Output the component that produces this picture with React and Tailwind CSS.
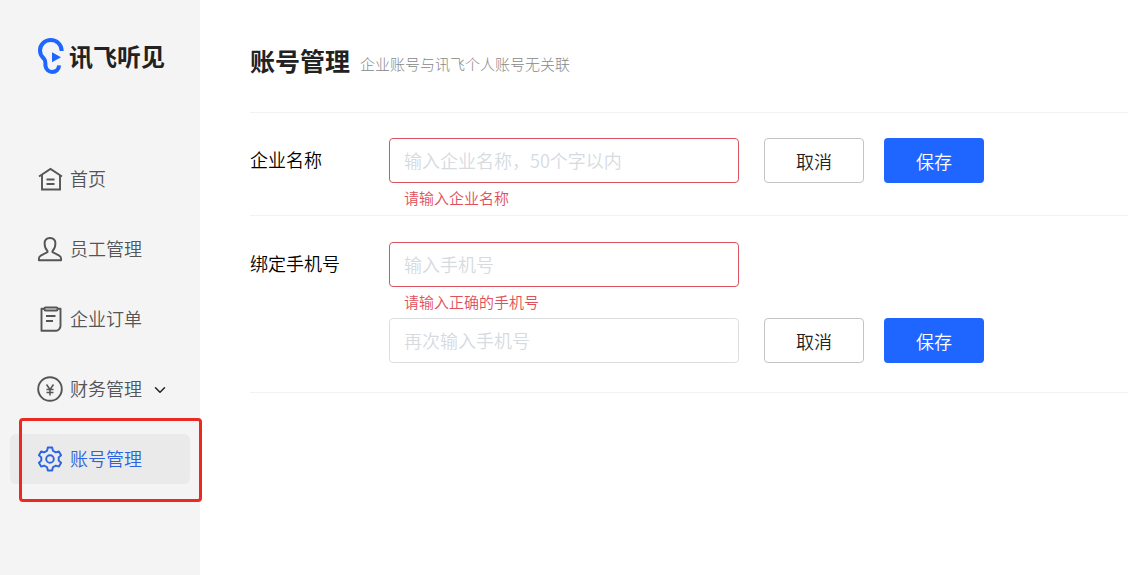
import React from "react";
import { ChevronDown } from "lucide-react";

const iconProps = {
  viewBox: "0 0 26 26",
  fill: "none",
  stroke: "currentColor",
  strokeWidth: 1.9,
  className: "w-[26px] h-[26px] shrink-0",
  "aria-hidden": true,
};

function HomeIcon() {
  return (
    <svg {...iconProps}>
      <path d="M2 10.5 13.5 3 25 10.5" />
      <path d="M5 9v14.5h18V9M9.5 13.5h8M9.5 18h8" />
    </svg>
  );
}

function StaffIcon() {
  return (
    <svg {...iconProps} strokeLinejoin="round">
      <path d="M10.5 15C8.5 13.2 7.6 10.6 7.6 7.6 7.6 4 9.8 2 13 2s5.4 2 5.4 5.6c0 3-.9 5.6-2.9 7.4v1.2l6.3 3.1c1.6.8 2.3 1.900 2.3 3.500v1.500H1.900v-1.500c0-1.600.7-2.700 2.300-3.500l6.300-3.100z" />
    </svg>
  );
}

function OrderIcon() {
  return (
    <svg {...iconProps} strokeLinejoin="round">
      <path d="M7 2.8H4.5v22h14.7c2.5-.8 4-2.3 4.3-4.5V2.8H21" />
      <rect x="7.5" y="1.5" width="13" height="3" rx="1" />
      <path d="M9 10h9.5M9 15h7" />
    </svg>
  );
}

function FinanceIcon() {
  return (
    <svg {...iconProps}>
      <circle cx="13" cy="13" r="11.8" />
      <path strokeWidth="1.5" d="m9.500 8.500 3.500 5 3.500-5M13 13v6.500M9.500 13.500h7M9.500 16.500h7" />
    </svg>
  );
}

function AccountIcon() {
  return (
    <svg {...iconProps} strokeLinejoin="round">
      <path d="M10.8 1.5h4.4l.7 3.2 2.900 1.700 3.100-1 2.200 3.800-2.400 2.200v3.200l2.400 2.200-2.200 3.800-3.100-1-2.900 1.700-.7 3.200h-4.400l-.7-3.200-2.900-1.700-3.100 1-2.200-3.800 2.400-2.200v-3.200L1.900 9.200l2.200-3.800 3.100 1 2.900-1.700z" />
      <circle cx="13" cy="13" r="3.8" />
    </svg>
  );
}

const menu = [
  { label: "首页", icon: <HomeIcon /> },
  { label: "员工管理", icon: <StaffIcon /> },
  { label: "企业订单", icon: <OrderIcon /> },
  { label: "财务管理", icon: <FinanceIcon />, more: true },
  { label: "账号管理", icon: <AccountIcon />, active: true },
];

function Logo() {
  return (
    <a href="#" className="flex items-center gap-[5px] h-9 pl-[37px] text-[#222]">
      <svg viewBox="0 0 27 36" className="w-[27px] h-9" fill="none" aria-hidden="true">
        <path
          d="M24.7 13C24.7 6.5 19.7 2 13.8 2 7.8 2 3 6.5 3 12.5c0 5 2.200 6.300 4.200 8.500 1.800 2 .9 4 1.300 7 .5 3.700 3.300 5.900 6.700 5.900 3.700 0 6.600-2.300 6.900-6.500"
          stroke="#1e66ff"
          strokeWidth="4"
        />
        <path d="M15 14.3v10l9-5z" fill="#1e66ff" />
      </svg>
      <span className="text-2xl leading-9 font-bold">讯飞听见</span>
    </a>
  );
}

function MenuItem({ item }) {
  return (
    <li className="relative">
      <a
        href="#"
        className={
          item.active
            ? "flex items-center gap-[7px] h-[50px] pl-[27px] rounded-md bg-[#eaeaea] text-[#2b63e0]"
            : "flex items-center gap-[7px] h-[50px] pl-[27px] rounded-md text-[#555]"
        }
      >
        {item.icon}
        <span className="text-lg font-[350] pb-0.5">{item.label}</span>
        {item.more && <ChevronDown className="w-[18px] h-[18px] mt-0.5 ml-0.5 text-[#222]" strokeWidth={2} />}
      </a>
      {item.active && (
        <div className="absolute left-[9px] -right-3 -top-4 -bottom-[18px] border-3 border-[#ea2a20] rounded-sm pointer-events-none" />
      )}
    </li>
  );
}

function TextField({ id, placeholder, label, error }) {
  return (
    <div>
      <input
        id={id}
        type="text"
        placeholder={placeholder}
        aria-label={label}
        className={
          error
            ? "block w-full h-[45px] px-3.5 pb-0.5 border border-[#d9535f] rounded bg-white text-lg font-[350] placeholder:text-[#d6dbdf]"
            : "block w-full h-[45px] px-3.5 pb-0.5 border border-[#dcdfe2] rounded bg-white text-lg font-[350] placeholder:text-[#d6dbdf]"
        }
      />
      {error && (
        <p className="h-[31px] pl-[15px] text-[15px] leading-[30px] font-[350] text-[#e04f5c]">{error}</p>
      )}
    </div>
  );
}

function Actions() {
  return (
    <div className="flex gap-5 ml-[25px]">
      <button
        type="button"
        className="w-[100px] h-[45px] border border-[#c4c4c4] rounded bg-white text-lg font-[350] text-[#222]"
      >
        取消
      </button>
      <button type="submit" className="w-[100px] h-[45px] rounded bg-[#1e66ff] text-lg font-[350] text-white">
        保存
      </button>
    </div>
  );
}

export default function App() {
  return (
    <div className="flex min-h-screen bg-white font-['Noto_Sans_CJK_SC',sans-serif]">
      <aside className="w-[200px] shrink-0 bg-[#f4f4f4] pt-[38px]">
        <Logo />
        <nav className="px-2.5 pt-20">
          <ul className="flex flex-col gap-5">
            {menu.map((item) => (
              <MenuItem key={item.label} item={item} />
            ))}
          </ul>
        </nav>
      </aside>

      <main className="flex-1 pl-[50px]">
        <header className="flex items-start gap-2.5 h-[113px] pt-[42px] border-b border-[#f2f2f2]">
          <h1 className="text-[25px] leading-9 font-bold text-[#222]">账号管理</h1>
          <p className="pt-1 text-[15px] leading-9 font-light text-[#888]">企业账号与讯飞个人账号无关联</p>
        </header>

        <form className="flex pt-[25px] pb-px border-b border-[#f2f2f2]">
          <label htmlFor="company" className="w-[139px] text-lg leading-[43px] font-[350] text-black">
            企业名称
          </label>
          <div className="w-[350px]">
            <TextField id="company" placeholder="输入企业名称，50个字以内" error="请输入企业名称" />
          </div>
          <Actions />
        </form>

        <form className="flex pt-[26px] pb-[29px] border-b border-[#f2f2f2]">
          <label htmlFor="phone" className="w-[139px] text-lg leading-[43px] font-[350] text-black">
            绑定手机号
          </label>
          <div className="w-[350px]">
            <TextField id="phone" placeholder="输入手机号" error="请输入正确的手机号" />
            <TextField id="phone-again" label="再次输入手机号" placeholder="再次输入手机号" />
          </div>
          <div className="self-end">
            <Actions />
          </div>
        </form>
      </main>
    </div>
  );
}
